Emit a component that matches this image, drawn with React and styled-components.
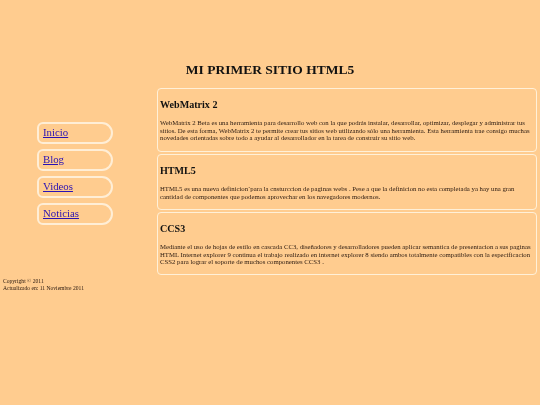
import React from "react";
import styled, { createGlobalStyle } from "styled-components";

const Global = createGlobalStyle`
  html, body { margin: 0; padding: 0; background: #ffcc8f; }
  body { font-family: "Liberation Serif", "Times New Roman", serif; color: #111; }
`;
const Page = styled.div`
  width: 540px; height: 405px; overflow: hidden; box-sizing: border-box; filter: blur(0.35px);
`;
const Header = styled.header`
  height: 88px; display: flex; align-items: flex-end; justify-content: center; padding-bottom: 10px; box-sizing: border-box;
`;
const Title = styled.h1`
  margin: 0; font-size: 13.5px; line-height: 16px; font-weight: bold;
`;
const Main = styled.div`
  display: flex; align-items: flex-start; padding: 0 3px 0 37px;
`;
const Nav = styled.nav`
  width: 76px; margin-right: 44px; padding-top: 34px; display: flex; flex-direction: column; gap: 5px; flex: none;
`;
const NavItem = styled.a`
  box-sizing: border-box; height: 22px; border: 2px solid #ffeed6; border-radius: 6px 11px 11px 6px;
  padding-left: 4px; font-size: 10.8px; line-height: 17px; color: #2a12b4; text-decoration: underline;
`;
const Content = styled.main`
  flex: 1; display: flex; flex-direction: column; gap: 2px;
`;
const Article = styled.article`
  box-sizing: border-box; height: ${p => p.$h}px; border: 1px solid #fff0d8; border-radius: 4px; padding: 8.5px 2px 0;
`;
const Heading = styled.h2`
  margin: 0 0 8.5px; font-size: 10.1px; line-height: 13px; font-weight: bold;
`;
const Text = styled.p`
  margin: 0; font-size: 6.75px; line-height: 7.7px; color: #2b1a10;
`;
const Footer = styled.footer`
  padding: 2.5px 0 0 3px; font-size: 5.6px; line-height: 7.7px; color: #2b1a10;
`;

const articles = [
  { h: 64, t: "WebMatrix 2", b: "WebMatrix 2 Beta es una herramienta para desarrollo web con la que podrás instalar, desarrollar, optimizar, desplegar y administrar tus sitios. De esta forma, WebMatrix 2 te permite crear tus sitios web utilizando sólo una herramienta. Esta herramienta trae consigo muchas novedades orientadas sobre todo a ayudar al desarrollador en la tarea de construir su sitio web." },
  { h: 56, t: "HTML5", b: "HTML5 es una nueva definicion´para la cnsturccion de paginas webs . Pese a que la definicion no esta completada ya hay una gran cantidad de componentes que podemos aprovechar en los navegadores modernos." },
  { h: 63, t: "CCS3", b: "Mediante el uso de hojas de estilo en cascada CC3, diseñadores y desarrolladores pueden aplicar semantica de presentacion a sus paginas HTML Internet explorer 9 continua el trabajo realizado en internet explorer 8 siendo ambos totalmente compatibles con la especificacion CSS2 para lograr el soporte de muchos componentes CCS3 ." },
];

export default function App() {
  return (
    <Page>
      <Global />
      <Header><Title>MI PRIMER SITIO HTML5</Title></Header>
      <Main>
        <Nav>
          {["Inicio", "Blog", "Videos", "Noticias"].map(n => <NavItem key={n} href="#">{n}</NavItem>)}
        </Nav>
        <Content>
          {articles.map(a => (
            <Article key={a.t} $h={a.h}>
              <Heading>{a.t}</Heading>
              <Text>{a.b}</Text>
            </Article>
          ))}
        </Content>
      </Main>
      <Footer>Copyright © 2011<br />Actualizado en: 11 Noviembre 2011</Footer>
    </Page>
  );
}
